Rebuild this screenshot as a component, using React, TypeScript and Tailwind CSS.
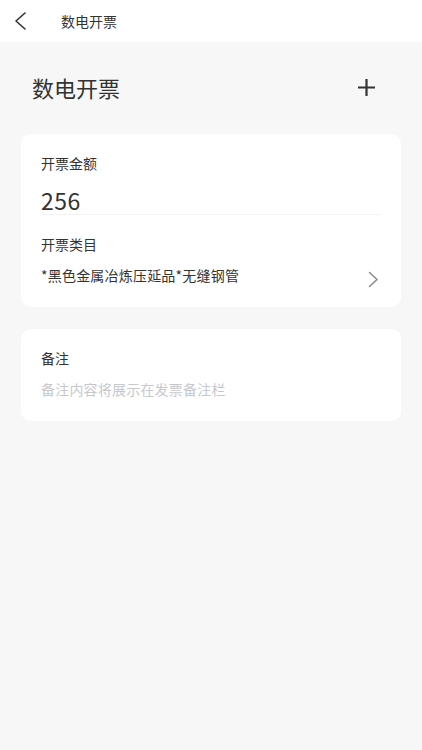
import React from 'react';

const font = { fontFamily: '"Noto Sans CJK SC", "Noto Sans", sans-serif' };

const BackIcon = () => (
  <svg width="14" height="18" viewBox="0 0 14 18" fill="none">
    <path d="M12 1 L3 9 L12 17" stroke="#333" strokeWidth="1.6" strokeLinecap="round" strokeLinejoin="round" />
  </svg>
);

const PlusIcon = () => (
  <svg width="19" height="19" viewBox="0 0 19 19" fill="none">
    <path d="M9.5 1 V18 M1 9.5 H18" stroke="#333" strokeWidth="2.2" />
  </svg>
);

const ChevronRight = () => (
  <svg width="11" height="17" viewBox="0 0 11 17" fill="none">
    <path d="M1.5 1.5 L9 8.5 L1.5 15.5" stroke="#8a8a8a" strokeWidth="1.5" strokeLinecap="round" strokeLinejoin="round" />
  </svg>
);

export default function App() {
  return (
    <div className="min-h-[750px] bg-[#f7f7f7] text-[#333]" style={font}>
      {/* 顶部导航 */}
      <div className="h-[42px] bg-white flex items-center">
        <button className="pl-[13px] w-[61px] flex items-center h-full">
          <BackIcon />
        </button>
        <span className="text-[14px] leading-5 text-[#333]">数电开票</span>
      </div>

      <div className="flex items-center justify-between pl-8 pr-[46px] pt-[30px]">
        <h1 className="text-[22px] leading-[30px] font-normal">数电开票</h1>
        <PlusIcon />
      </div>

      {/* 金额 + 类目 */}
      <div className="mx-[21px] mt-8 bg-white rounded-[10px] px-5 pt-[19px] pb-[22px]">
        <div className="text-[14px] leading-5">开票金额</div>
        <div className="mt-[13px] text-[23px] leading-[28px] tracking-[0.5px]">256</div>
        <div className="h-px bg-[#f3f3f3]" />
        <div className="mt-[19px] text-[14px] leading-5">开票类目</div>
        <div className="mt-[11px] h-5 flex items-center justify-between">
          <span className="text-[14px] leading-5 tracking-[0.2px]">*黑色金属冶炼压延品*无缝钢管</span>
          <span className="mr-[2px] translate-y-[4px]">
            <ChevronRight />
          </span>
        </div>
      </div>

      {/* 备注 */}
      <div className="mx-[21px] mt-[22px] bg-white rounded-[10px] px-5 pt-[19px] pb-[22px]">
        <div className="text-[14px] leading-5">备注</div>
        <div className="mt-[11px] text-[14px] leading-5 text-[#c8c8cc] tracking-[0.2px]">备注内容将展示在发票备注栏</div>
      </div>
    </div>
  );
}
